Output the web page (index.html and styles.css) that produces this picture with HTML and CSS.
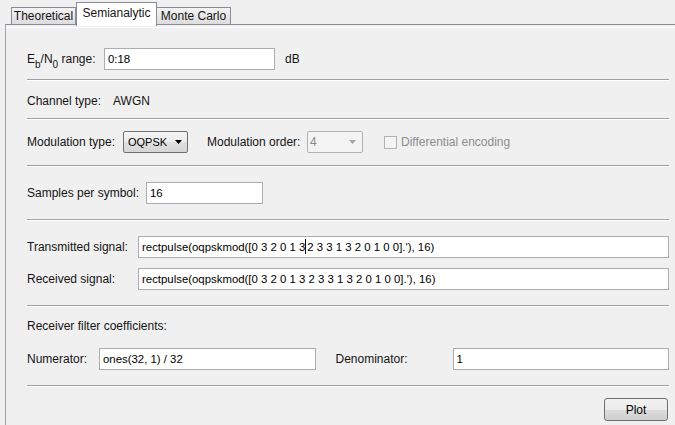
FILE: index.html
```html
<!DOCTYPE html>
<html>
<head>
<meta charset="utf-8">
<title>BER Analysis</title>
<link rel="stylesheet" href="styles.css">
</head>
<body>
<div class="tabs">
  <div class="tab tab-theory">Theoretical</div>
  <div class="tab tab-active">Semianalytic</div>
  <div class="tab tab-mc">Monte Carlo</div>
</div>
<div class="panel">
<div class="sheet">

  <div class="row row-ebno">
    <span class="label lbl-ebno">E<sub>b</sub>/N<sub>0</sub> range:</span>
    <div class="field fld-ebno">0:18</div>
    <span class="unit">dB</span>
  </div>
  <div class="sep sep-a"></div>

  <div class="row row-channel">
    <span class="label lbl-channel">Channel type:</span>
    <span>AWGN</span>
  </div>
  <div class="sep sep-b"></div>

  <div class="row row-mod">
    <span class="label lbl-mod">Modulation type:</span>
    <div class="select">
      <span class="select-text">OQPSK</span>
      <svg class="arrow" width="7" height="4" viewBox="0 0 7 4"><polygon points="0,0 7,0 3.5,4" fill="#000"/></svg>
    </div>
    <span class="label lbl-order">Modulation order:</span>
    <div class="select select-off">
      <span class="select-text">4</span>
      <svg class="arrow" width="7" height="4" viewBox="0 0 7 4"><polygon points="0,0 7,0 3.5,4" fill="#a6a6a6"/></svg>
    </div>
    <span class="check"></span>
    <span class="check-text">Differential encoding</span>
  </div>
  <div class="sep sep-c"></div>

  <div class="row row-sps">
    <span class="label lbl-sps">Samples per symbol:</span>
    <div class="field fld-sps">16</div>
  </div>
  <div class="sep sep-d"></div>

  <div class="row row-tx">
    <span class="label lbl-signal">Transmitted signal:</span>
    <div class="field fld-wide">rectpulse(oqpskmod([0 3 2 0 1 3<span class="caret"></span>2 3 3 1 3 2 0 1 0 0].'), 16)</div>
  </div>
  <div class="row row-rx">
    <span class="label lbl-signal">Received signal:</span>
    <div class="field fld-wide">rectpulse(oqpskmod([0 3 2 0 1 3 2 3 3 1 3 2 0 1 0 0].'), 16)</div>
  </div>
  <div class="sep sep-e"></div>

  <div class="row row-filter">
    <span>Receiver filter coefficients:</span>
  </div>
  <div class="row row-coef">
    <span class="label lbl-num">Numerator:</span>
    <div class="field fld-wide">ones(32, 1) / 32</div>
    <span class="label lbl-den">Denominator:</span>
    <div class="field fld-wide">1</div>
  </div>
  <div class="sep sep-f"></div>

  <div class="actions">
    <button class="btn">Plot</button>
  </div>

</div>
</div>
</body>
</html>
```

FILE: styles.css
```css
* {
  box-sizing: border-box;
}

html, body {
  margin: 0;
  padding: 0;
}

body {
  width: 675px;
  height: 425px;
  overflow: hidden;
  background: #f0f0f0;
  font-family: "Liberation Sans", Arial, sans-serif;
  font-size: 12px;
  color: #141414;
}

/* tab strip */
.tabs {
  display: flex;
  align-items: flex-end;
  height: 24px;
  padding-left: 11px;
}

.tab {
  height: 17px;
  border: 1px solid #898c95;
  border-bottom: none;
  background: linear-gradient(#f3f3f3, #dcdcdc);
  line-height: 16px;
  text-align: center;
}

.tab-theory { width: 65px; }
.tab-mc { width: 75px; margin-left: -1px; }

.tab-active {
  position: relative;
  width: 81px;
  height: 24px;
  margin-bottom: -2px;
  padding-top: 2px;
  background: #fff;
}

.panel {
  margin-left: 5px;
  height: 401px;
  border-top: 1px solid #898c95;
  border-left: 1px solid #a3a5aa;
  padding-top: 2px;
}

.sheet {
  border-top: 1px solid #fff;
  padding: 0 6px 0 21px;
}

/* rows */
.row {
  display: flex;
  align-items: center;
  height: 22px;
  white-space: nowrap;
}

.label { flex: none; }

.row-ebno { margin-top: 20px; }
.row-channel { margin-top: 9px; }
.row-mod { margin-top: 11px; }
.row-sps { margin-top: 15px; }
.row-tx { margin-top: 15px; }
.row-rx { margin-top: 10px; }
.row-filter { margin-top: 8px; }
.row-coef { margin-top: 11px; }

.sep {
  height: 2px;
  border-top: 1px solid #a0a0a0;
  border-bottom: 1px solid #fff;
}

.sep-a { margin-top: 9px; }
.sep-b { margin-top: 6px; }
.sep-c { margin-top: 12px; }
.sep-d { margin-top: 15px; }
.sep-e { margin-top: 15px; }
.sep-f { margin-top: 15px; }

.lbl-ebno { width: 77px; }
.lbl-channel { width: 86px; }
.lbl-mod { width: 96px; }
.lbl-order { width: 100px; margin-left: 19px; }
.lbl-sps { width: 119px; }
.lbl-signal { width: 111px; }
.lbl-num { width: 72px; }
.lbl-den { width: 117px; margin-left: 20px; }

sub {
  font-size: 10px;
  vertical-align: -5px;
  line-height: 0;
}

.unit { margin-left: 10px; }

/* text fields */
.field {
  height: 22px;
  border: 1px solid #abadb3;
  background: #fff;
  padding: 0 3px;
  line-height: 20px;
  font-size: 11.4px;
  color: #000;
  white-space: nowrap;
  overflow: hidden;
}

.fld-ebno { width: 171px; flex: none; }
.fld-sps { width: 117px; flex: none; }
.fld-wide { flex: 1; min-width: 0; }

.caret {
  display: inline-block;
  width: 1px;
  height: 15px;
  background: #000;
  vertical-align: middle;
  margin: -2px 1px 0 0;
}

/* combo boxes */
.select {
  flex: none;
  display: flex;
  align-items: center;
  justify-content: space-between;
  width: 65px;
  height: 22px;
  padding: 0 5px 0 4px;
  border: 1px solid #707070;
  border-radius: 2px;
  background: linear-gradient(#f4f4f4 0%, #ececec 50%, #e0e0e0 50%, #d6d6d6 100%);
  color: #000;
  font-size: 11px;
}

.select-off {
  width: 56px;
  padding: 0 6px 0 2px;
  border-color: #adb2b5;
  background: #f4f4f4;
  color: #8a8a8a;
  font-size: 12px;
}

.check {
  flex: none;
  width: 13px;
  height: 13px;
  margin-left: 21px;
  border: 1px solid #b1b1b1;
  background: #f4f4f4;
}

.check-text {
  margin-left: 4px;
  color: #8d8d8d;
}

/* button bar */
.actions {
  display: flex;
  justify-content: flex-end;
  margin-top: 11px;
}

.btn {
  width: 64px;
  height: 23px;
  margin-right: 1px;
  border: 1px solid #707070;
  border-radius: 3px;
  background: linear-gradient(#f2f2f2 0%, #ebebeb 50%, #dddddd 50%, #cfcfcf 100%);
  font-family: "Liberation Sans", Arial, sans-serif;
  font-size: 12px;
  color: #000;
  padding: 0;
}
```
